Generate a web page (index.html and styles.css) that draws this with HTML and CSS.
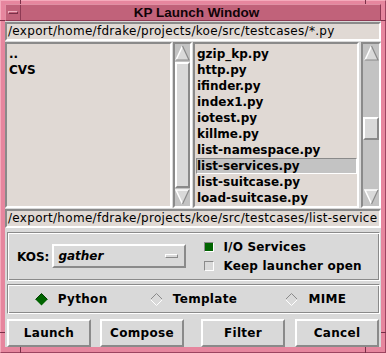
FILE: index.html
```html
<!DOCTYPE html>
<html>
<head>
<meta charset="utf-8">
<link rel="stylesheet" href="styles.css">
</head>
<body>
<div class="window">
  <span class="tick tick-t1"></span><span class="tick tick-t2"></span>
  <span class="tick tick-b1"></span><span class="tick tick-b2"></span>
  <span class="tick tick-l1"></span><span class="tick tick-l2"></span>
  <span class="tick tick-r1"></span><span class="tick tick-r2"></span>
  <div class="titlebar">
    <div class="menu-btn"><span class="dash"></span></div>
    <div class="title">KP Launch Window</div>
  </div>
  <div class="client">
    <div class="entry">/export/home/fdrake/projects/koe/src/testcases/*.py</div>
    <div class="lists">
      <div class="half">
        <div class="listbox">
          <div class="item">..</div>
          <div class="item">CVS</div>
        </div>
        <div class="scrollbar">
          <svg class="arrow" width="15" height="16" viewBox="0 0 15 16"><polygon points="7.5,1 14,15 1,15" fill="#d9d9d9"/><polyline points="1,15 7.5,1" fill="none" stroke="#ffffff" stroke-width="1.5"/><polyline points="7.5,1 14,15 1,15" fill="none" stroke="#8a8a8a" stroke-width="1.2"/></svg>
          <div class="trough"><div class="thumb thumb-full"></div></div>
          <svg class="arrow" width="15" height="16" viewBox="0 0 15 16"><polygon points="1,1 14,1 7.5,15" fill="#d9d9d9"/><polyline points="14,1 1,1 7.5,15" fill="none" stroke="#ffffff" stroke-width="1.5"/><polyline points="14,1 7.5,15" fill="none" stroke="#8a8a8a" stroke-width="1.2"/></svg>
        </div>
      </div>
      <div class="half right">
        <div class="listbox">
          <div class="item">gzip_kp.py</div>
          <div class="item">http.py</div>
          <div class="item">ifinder.py</div>
          <div class="item">index1.py</div>
          <div class="item">iotest.py</div>
          <div class="item">killme.py</div>
          <div class="item">list-namespace.py</div>
          <div class="item selected">list-services.py</div>
          <div class="item">list-suitcase.py</div>
          <div class="item">load-suitcase.py</div>
        </div>
        <div class="scrollbar">
          <svg class="arrow" width="15" height="16" viewBox="0 0 15 16"><polygon points="7.5,1 14,15 1,15" fill="#d9d9d9"/><polyline points="1,15 7.5,1" fill="none" stroke="#ffffff" stroke-width="1.5"/><polyline points="7.5,1 14,15 1,15" fill="none" stroke="#8a8a8a" stroke-width="1.2"/></svg>
          <div class="trough"><div class="thumb thumb-part"></div></div>
          <svg class="arrow" width="15" height="16" viewBox="0 0 15 16"><polygon points="1,1 14,1 7.5,15" fill="#d9d9d9"/><polyline points="14,1 1,1 7.5,15" fill="none" stroke="#ffffff" stroke-width="1.5"/><polyline points="14,1 7.5,15" fill="none" stroke="#8a8a8a" stroke-width="1.2"/></svg>
        </div>
      </div>
    </div>
    <div class="entry entry2">/export/home/fdrake/projects/koe/src/testcases/list-service</div>
    <div class="panel options">
      <div class="kos">KOS:</div>
      <div class="menubutton"><span class="mb-text">gather</span><span class="indicator"></span></div>
      <div class="checks">
        <div class="check"><span class="box on"></span>I/O Services</div>
        <div class="check"><span class="box"></span>Keep launcher open</div>
      </div>
    </div>
    <div class="panel radios">
      <div class="radio"><svg class="diamond" width="13" height="13" viewBox="0 0 13 13"><polygon points="6.5,0.5 12.5,6.5 6.5,12.5 0.5,6.5" fill="#006400"/><polyline points="0.5,6.5 6.5,0.5 12.5,6.5" fill="none" stroke="#004000" stroke-width="1"/></svg>Python</div>
      <div class="radio"><svg class="diamond" width="13" height="13" viewBox="0 0 13 13"><polyline points="0.5,6.5 6.5,0.5 12.5,6.5" fill="none" stroke="#8a8a8a" stroke-width="1"/><polyline points="0.5,6.5 6.5,12.5 12.5,6.5" fill="none" stroke="#ffffff" stroke-width="1"/></svg>Template</div>
      <div class="radio"><svg class="diamond" width="13" height="13" viewBox="0 0 13 13"><polyline points="0.5,6.5 6.5,0.5 12.5,6.5" fill="none" stroke="#8a8a8a" stroke-width="1"/><polyline points="0.5,6.5 6.5,12.5 12.5,6.5" fill="none" stroke="#ffffff" stroke-width="1"/></svg>MIME</div>
    </div>
    <div class="buttons">
      <div class="button">Launch</div>
      <div class="button b-compose">Compose</div>
      <div class="button b-filter">Filter</div>
      <div class="button b-cancel">Cancel</div>
    </div>
  </div>
</div>
</body>
</html>
```
FILE: styles.css
```css
* { box-sizing: border-box; }
html, body { margin: 0; padding: 0; }
body { background: #e3819b; font-family: "DejaVu Sans", sans-serif; }

.window {
  position: relative;
  width: 386px;
  height: 353px;
  background: #e6869e;
  border: 1px solid;
  border-color: #f4aabb #9c4460 #9c4460 #f4aabb;
  padding: 3px 4px 5px 4px;
  display: flex;
  flex-direction: column;
}
.tick { position: absolute; background: #7a3048; }
.tick-t1 { left: 19px; top: -1px; width: 1px; height: 4px; }
.tick-t2 { left: 364px; top: -1px; width: 1px; height: 4px; }
.tick-b1 { left: 19px; bottom: -1px; width: 1px; height: 6px; }
.tick-b2 { left: 364px; bottom: -1px; width: 1px; height: 6px; }
.tick-l1 { left: -1px; top: 19px; width: 5px; height: 1px; }
.tick-l2 { left: -1px; top: 331px; width: 5px; height: 1px; }
.tick-r1 { right: -1px; top: 19px; width: 5px; height: 1px; }
.tick-r2 { right: -1px; top: 331px; width: 5px; height: 1px; }

.titlebar {
  height: 17px;
  display: flex;
  background: #c1627a;
  border: 1px solid;
  border-color: #e08fa3 #8e3a54 #8e3a54 #e08fa3;
}
.menu-btn {
  width: 15px;
  display: flex;
  align-items: center;
  justify-content: center;
  border-right: 1px solid #8e3a54;
}
.dash {
  width: 10px;
  height: 3px;
  border: 1px solid;
  border-color: #f0b0c0 #7a3048 #7a3048 #f0b0c0;
  background: #c1627a;
}
.title {
  flex: 1;
  text-align: center;
  font-family: "Liberation Sans", sans-serif;
  font-weight: bold;
  font-size: 13.5px;
  line-height: 15px;
  padding-right: 8px;
  color: #100408;
}

.client {
  height: 326px;
  background: #d9d9d9;
  padding-top: 1px;
  display: flex;
  flex-direction: column;
}

.entry {
  height: 19px;
  background: #e0d9d4;
  border: 2px solid;
  border-color: #8a8a8a #ffffff #ffffff #8a8a8a;
  font-size: 12px;
  letter-spacing: 0.3px;
  line-height: 15px;
  padding-left: 1px;
  white-space: nowrap;
  overflow: hidden;
  color: #000;
}
.entry2 { margin-top: 1px; }

.lists {
  margin-top: 1px;
  height: 166px;
  display: flex;
  gap: 1px;
}
.half { display: flex; gap: 1px; }
.half .listbox { width: 167px; }
.half .scrollbar { width: 19px; }
.half.right .listbox { width: 166px; }
.half.right { gap: 2px; }
.half.right .scrollbar { width: 20px; }

.listbox {
  background: #e0d9d4;
  border: 2px solid;
  border-color: #8a8a8a #ffffff #ffffff #8a8a8a;
  padding: 2px 0 0 1px;
  overflow: hidden;
}
.item {
  font-weight: bold;
  font-size: 12px;
  line-height: 16px;
  height: 16px;
  padding-left: 1px;
  white-space: nowrap;
  color: #000;
}
.item.selected {
  background: #c3c3c3;
  border: 1px solid;
  border-color: #8a8a8a #ffffff #ffffff #8a8a8a;
  line-height: 14px;
  padding-left: 0;
}

.scrollbar {
  background: #c3c3c3;
  border: 2px solid;
  border-color: #8a8a8a #ffffff #ffffff #8a8a8a;
  display: flex;
  flex-direction: column;
  align-items: center;
  padding: 1px 0;
}
.arrow { display: block; flex: none; }
.trough {
  flex: 1;
  width: 100%;
  display: flex;
  flex-direction: column;
  padding: 1px 0;
}
.thumb {
  background: #d9d9d9;
  border: 2px solid;
  border-color: #ffffff #8a8a8a #8a8a8a #ffffff;
}
.thumb-full { flex: 1; }
.thumb-part { height: 23px; margin-top: 55px; }

.panel {
  margin: 4px 1px 0 2px;
  border: 1px solid;
  border-color: #8a8a8a #ffffff #ffffff #8a8a8a;
  box-shadow: inset 1px 1px 0 #ffffff, inset -1px -1px 0 #8a8a8a;
  display: flex;
  align-items: center;
  font-weight: bold;
  font-size: 12px;
  color: #000;
}
.options { height: 49px; padding-left: 9px; }
.kos { margin-right: 3px; }
.menubutton {
  width: 134px;
  height: 24px;
  margin-top: -1px;
  border: 2px solid;
  border-color: #ffffff #8a8a8a #8a8a8a #ffffff;
  display: flex;
  align-items: center;
  justify-content: space-between;
  padding: 0 6px 0 4px;
  font-style: italic;
}
.indicator {
  width: 13px;
  height: 4px;
  border: 1px solid;
  border-color: #ffffff #8a8a8a #8a8a8a #ffffff;
}
.checks {
  margin-left: 18px;
  display: flex;
  flex-direction: column;
  gap: 3px;
  letter-spacing: 0.2px;
}
.check { display: flex; align-items: center; height: 16px; }
.box {
  width: 10px;
  height: 10px;
  margin-right: 9px;
  border: 1px solid;
  border-color: #8a8a8a #ffffff #ffffff #8a8a8a;
  background: #d9d9d9;
}
.box.on { background: #006400; }

.radios { height: 30px; margin-top: 3px; padding: 0 2px; }
.radio {
  flex: 1;
  display: flex;
  align-items: center;
  justify-content: center;
  letter-spacing: 0.3px;
}
.diamond { display: block; margin-right: 10px; }

.buttons {
  margin-top: 5px;
  height: 28px;
  display: flex;
  padding-left: 2px;
}
.button {
  width: 84px;
  height: 28px;
  border: 2px solid;
  border-color: #ffffff #8a8a8a #8a8a8a #ffffff;
  display: flex;
  align-items: center;
  justify-content: center;
  font-weight: bold;
  font-size: 12px;
  letter-spacing: 0.3px;
  color: #000;
}
.b-compose { margin-left: 9px; }
.b-filter { margin-left: 17px; }
.b-cancel { margin-left: 10px; }
```
